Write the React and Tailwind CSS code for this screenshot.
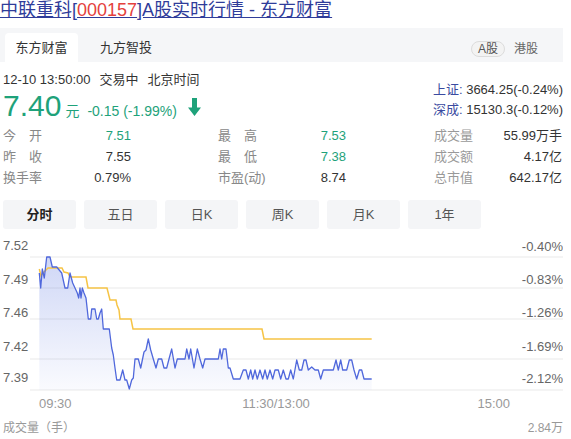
import React from 'react';

const priceLine = [
  [39.3, 273], [40.7, 288], [42.3, 269], [44.3, 278], [46.7, 257], [50, 257], [52.3, 267], [56.7, 267],
  [61.7, 273], [65, 288], [67.7, 288], [70, 273], [72.7, 283], [75, 288], [77.3, 293], [78.7, 298],
  [80, 288], [81, 298], [82.3, 288], [84, 293], [86, 298], [88.3, 319], [90.7, 319], [91.7, 309],
  [95, 309], [96.7, 319], [98.3, 319], [100, 313], [101.7, 309], [103.3, 329], [109.3, 329], [111.7, 348],
  [113.3, 355], [115, 368], [116.7, 380], [120, 380], [122.7, 370], [125, 380], [126.7, 380], [129.3, 389],
  [131.7, 380], [133.3, 378], [135, 359], [138.3, 359], [140.7, 368], [144, 352], [146, 350], [148.3, 339],
  [150.7, 350], [153.3, 359], [156, 368], [158.3, 359], [161.7, 359], [164, 368], [166.7, 368], [169, 359],
  [171.7, 349], [175, 368], [177.3, 359], [185, 359], [186.7, 349], [189, 359], [190.7, 349], [194, 368],
  [197.3, 349], [200, 359], [202.7, 368], [205, 359], [218.3, 359], [220, 349], [221.7, 359], [223.3, 349],
  [226, 349], [228.3, 368], [230, 368], [233.3, 379], [240, 379], [243.3, 370], [246, 370], [248.3, 379],
  [250.7, 370], [252.7, 379], [255, 370], [257.3, 379], [260, 370], [262.7, 379], [265, 370], [267.3, 379],
  [270, 370], [272.7, 379], [275, 370], [278.3, 370], [280.7, 379], [283.3, 370], [286, 379], [288.3, 379],
  [290.7, 370], [293.3, 379], [296.7, 360], [299.3, 370], [301.7, 370], [304, 360], [306, 360], [308.3, 370],
  [311.7, 367], [315, 370], [318.3, 370], [320.7, 379], [323.3, 370], [333.3, 370], [336, 360], [338.3, 370],
  [340.7, 360], [342.7, 370], [346.7, 370], [349.3, 360], [351.7, 360], [354, 370], [356.7, 379], [359.3, 370],
  [361.7, 370], [364, 379], [371.7, 379],
];

const avgLine = [
  [39.3, 269], [41, 276], [43, 273], [45, 271], [48, 268], [62, 268], [64, 272], [68, 273], [70, 277],
  [86, 277], [88, 288], [107, 288], [110, 300], [116, 300], [117, 305], [119, 310], [120, 319], [131, 319],
  [133, 329], [262, 329], [264, 339], [371.7, 339],
];

const toPath = (pts) => pts.map((p, i) => (i ? 'L' : 'M') + p[0] + ' ' + p[1]).join(' ');

const gridY = [257, 288, 319, 359, 390];
const leftLabels = [['7.52', 245], ['7.49', 279], ['7.46', 312.5], ['7.42', 346], ['7.39', 377.5]];
const rightLabels = [['-0.40%', 246], ['-0.83%', 279], ['-1.26%', 312.5], ['-1.69%', 346], ['-2.12%', 378]];

const stats = [
  [
    { label: ['今', '开'], value: '7.51', green: true },
    { label: ['昨', '收'], value: '7.55' },
    { label: ['换手率'], value: '0.79%' },
  ],
  [
    { label: ['最', '高'], value: '7.53', green: true },
    { label: ['最', '低'], value: '7.38', green: true },
    { label: ['市盈(动)'], value: '8.74' },
  ],
  [
    { label: ['成交量'], value: '55.99万手', light: true },
    { label: ['成交额'], value: '4.17亿', light: true },
    { label: ['总市值'], value: '642.17亿', light: true },
  ],
];

const periods = ['分时', '五日', '日K', '周K', '月K', '1年'];

const StatRow = ({ item }) => (
  <div className="flex justify-between h-[21px] items-center">
    <span
      className={
        'flex justify-between ' +
        (item.label.length > 1 ? 'w-[39px] ' : '') +
        (item.light ? 'text-[#999]' : 'text-[#888]')
      }
    >
      {item.label.map((t) => (
        <span key={t}>{t}</span>
      ))}
    </span>
    <span className={item.green ? 'text-[#1ea27a]' : 'text-[#333]'}>{item.value}</span>
  </div>
);

const Chart = () => (
  <svg width="563" height="180" viewBox="0 236 563 180" className="block mt-[7px]">
    <defs>
      <linearGradient id="fillGrad" x1="0" y1="0" x2="0" y2="1">
        <stop offset="0%" stopColor="#5470e0" stopOpacity="0.28" />
        <stop offset="100%" stopColor="#5470e0" stopOpacity="0.03" />
      </linearGradient>
    </defs>
    {gridY.map((y) => (
      <line key={y} x1="30" x2="563" y1={y} y2={y} stroke="#f0f0f0" strokeWidth="1.5" />
    ))}
    <path d={toPath(priceLine) + ' L371.7 390 L39.3 390 Z'} fill="url(#fillGrad)" />
    <path d={toPath(avgLine)} fill="none" stroke="#f6c445" strokeWidth="1.5" />
    <path d={toPath(priceLine)} fill="none" stroke="#5068dc" strokeWidth="1.3" strokeLinejoin="round" />
    <g fontSize="13" fill="#666" fontFamily='"Liberation Sans", sans-serif'>
      {leftLabels.map(([t, y]) => (
        <text key={t} x="3" y={y + 4.6}>{t}</text>
      ))}
      {rightLabels.map(([t, y]) => (
        <text key={t} x="563" y={y + 4.6} textAnchor="end">{t}</text>
      ))}
    </g>
    <g fontSize="13" fill="#999" fontFamily='"Liberation Sans", sans-serif'>
      <text x="39" y="407.6">09:30</text>
      <text x="276" y="407.6" textAnchor="middle">11:30/13:00</text>
      <text x="510" y="407.6" textAnchor="end">15:00</text>
    </g>
  </svg>
);

const App = () => {
  return (
    <div
      className="w-[563px] bg-white text-[13px] text-[#333]"
      style={{ fontFamily: '"Liberation Sans", "Noto Sans CJK SC", sans-serif' }}
    >
      <a className="block text-[18px] leading-[20px] underline text-[#2f3c9a] whitespace-nowrap">
        中联重科[<span className="text-[#e4403d]">000157</span>]A股实时行情 - 东方财富
      </a>

      <div className="mt-[8px] h-[34px] bg-[#f5f6f8] flex items-end pl-[5px] pr-[25px]">
        <div className="h-[29px] w-[73px] bg-white rounded-t-[4px] flex items-center justify-center">
          东方财富
        </div>
        <div className="h-[29px] ml-[22px] flex items-center">九方智投</div>
        <div className="ml-auto h-[29px] flex items-center gap-[9px] text-[12px] pt-[3px]">
          <span className="h-[16px] px-[6px] rounded-full border border-[#dcdcdc] bg-[#f3f3f3] flex items-center text-[#555]">
            A股
          </span>
          <span className="text-[#666]">港股</span>
        </div>
      </div>

      <div className="mt-[9px] pl-[3px] flex justify-between">
        <div>
          <div className="leading-[18px] whitespace-nowrap">
            12-10 13:50:00<span className="ml-[9px]">交易中</span>
            <span className="ml-[9px]">北京时间</span>
          </div>
          <div className="h-[33px] flex items-baseline text-[#1ea27a]">
            <span className="text-[30px] leading-[33px]">7.40</span>
            <span className="ml-[4px] text-[14px]">元</span>
            <span className="ml-[8px] text-[14px]">-0.15 (-1.99%)</span>
            <svg width="13" height="18" viewBox="0 0 13 18" className="ml-[11px] self-center mt-[3px]">
              <path d="M4 0h5v9.5h4L6.5 18 0 9.5h4z" fill="#1ea27a" />
            </svg>
          </div>
        </div>
        <div className="pt-[9px] leading-[20px] whitespace-nowrap">
          <div>
            <span className="text-[#3a4aa0]">上证:</span> 3664.25(-0.24%)
          </div>
          <div>
            <span className="text-[#3a4aa0]">深成:</span> 15130.3(-0.12%)
          </div>
        </div>
      </div>

      <div className="mt-[3px] pl-[3px] flex gap-[87px]">
        {stats.map((col, ci) => (
          <div key={ci} className={ci === 2 ? 'w-[128px] ml-[1px]' : 'w-[128px]'}>
            {col.map((item) => (
              <StatRow key={item.value} item={item} />
            ))}
          </div>
        ))}
      </div>

      <div className="mt-[12px] pl-[3px] flex gap-[8px]">
        {periods.map((p, i) => (
          <div
            key={p}
            className={
              'w-[73px] h-[29px] rounded-[3px] bg-[#f4f5f7] flex items-center justify-center ' +
              (i === 0 ? 'font-bold text-[#222]' : 'text-[#555]')
            }
          >
            {p}
          </div>
        ))}
      </div>

      <Chart />

      <div className="mt-[2px] pl-[3px] flex justify-between leading-[20px] text-[12px] text-[#999]">
        <span>成交量（手）</span>
        <span>2.84万</span>
      </div>
    </div>
  );
};

export default App;
